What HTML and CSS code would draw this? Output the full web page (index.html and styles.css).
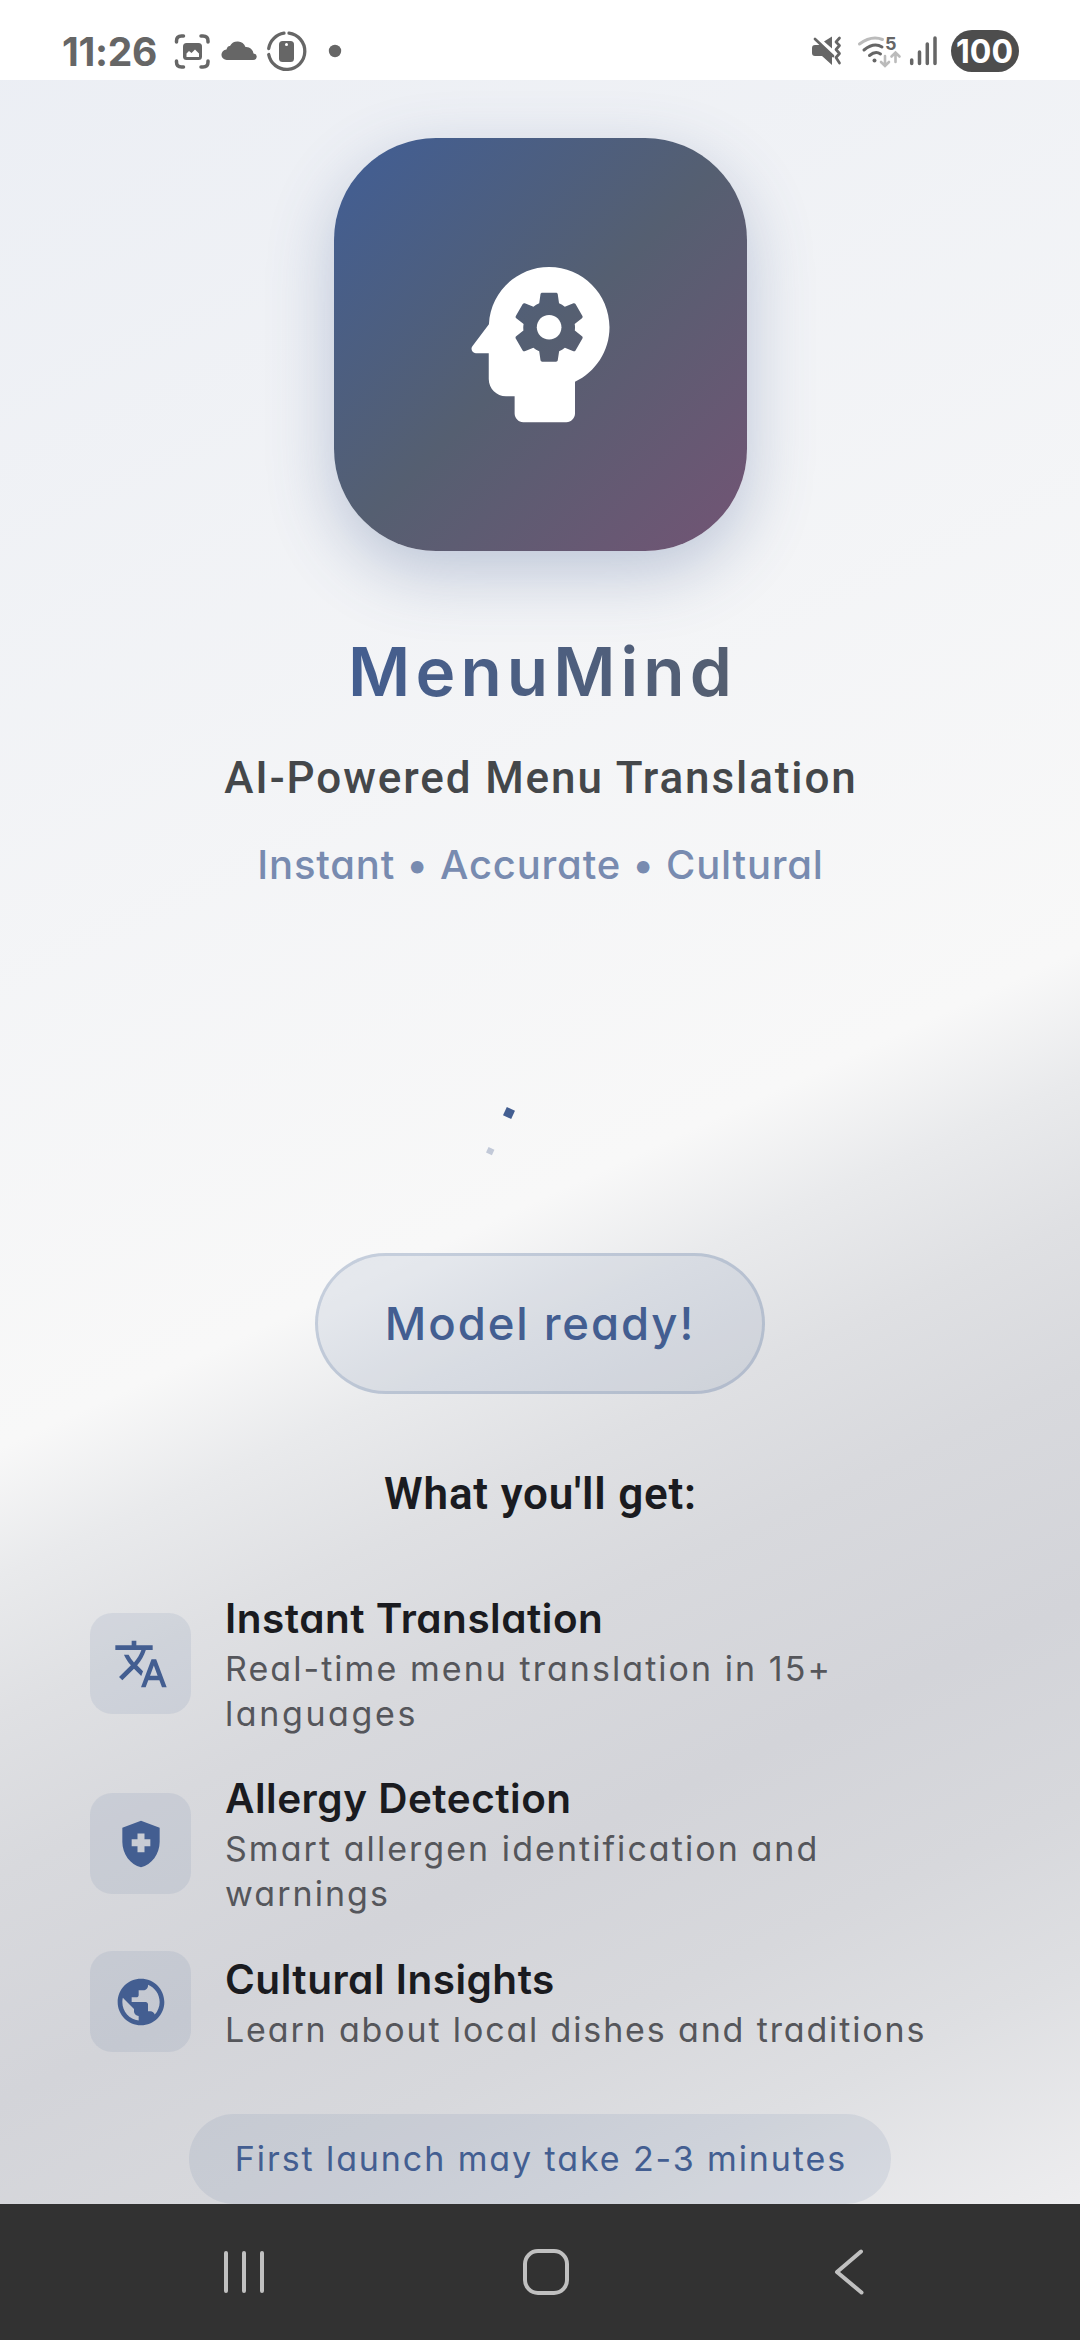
FILE: index.html
```html
<!DOCTYPE html>
<html lang="en">
<head>
<meta charset="utf-8">
<title>MenuMind</title>
<link rel="stylesheet" href="styles.css">
</head>
<body>
<div class="screen">
  <header class="status">
    <span class="clock">11:26</span>
    <svg class="status-left" width="170" height="44" viewBox="172 30 170 44">
      <path d="M176.500 42v-1q0-5 5-5h2M201 36h2q5 0 5 5v1M176.500 61v1q0 5 5 5h2M201 67h2q5 0 5-5v-1" fill="none" stroke="#666" stroke-width="3.500" stroke-linecap="round"/>
      <path d="M284 33.200A18.500 18.500 0 0 0 268.700 48.500M268.700 54.500A18.200 18.200 0 1 0 289 33.200" fill="none" stroke="#666" stroke-width="3.300" stroke-linecap="round"/>
      <rect x="183" y="43" width="19" height="17" rx="3.500" fill="#666"/>
      <path d="M186.500 57v-3.500l2.500-2.500 2.500 2 3.500-3.500 1.500 1.500 2.500 2.500v3.500z" fill="#fff"/>
      <path d="M227 60a5.300 5.300 0 0 1-.500-10.600q1-3.600 3.500-3.400a8.600 8.600 0 0 1 15.500 1q6.500-.500 8 6.500 3.500.500 3.200 3.500-.200 3-3.700 3z" fill="#666"/>
      <rect x="279" y="41" width="15" height="21" rx="3.500" fill="#666"/><circle cx="286.500" cy="44.500" r="1.500" fill="#fff"/>
      <circle cx="335" cy="51" r="6.200" fill="#666"/>
    </svg>
    <svg class="status-right" width="210" height="44" viewBox="810 29 210 44">
      <path d="M815 45h6l11 10v10l-10-9h-7q-3 0-3-3v-5q0-3 3-3zM824 41.500l8-5v12z" fill="#666"/>
      <path d="M815 39l18 17M839.500 38l-3.500 4 3.500 3.500-3.500 4 3.500 4-3.500 4 3.500 5.500" fill="none" stroke="#666" stroke-width="2.700" stroke-linecap="round" stroke-linejoin="round"/>
      <g fill="none" stroke-width="3" stroke-linecap="round">
        <path d="M859.500 44q12-9 23-4.500" stroke="#bbb"/>
        <path d="M864 50q10-8 18-3M869.500 55.500q6-5 11-1.500" stroke="#666"/>
        <path d="M885 56v9M881 62l4 4 4-4M895.500 62v-9M891.500 56.500l4-4 4 4" stroke="#bbb" stroke-width="2.600"/>
        <path d="M911.700 60v3.500M919.500 52v11.500M927.300 44v19.500M935 38v25.500" stroke="#666" stroke-width="3.500"/>
      </g>
      <circle cx="874.500" cy="60.500" r="2" fill="#666"/>
      <text x="885" y="50" class="wifi-gen">5</text>
      <rect x="951" y="30" width="68" height="42" rx="21" fill="#4d4d4d"/>
      <text x="984.500" y="63" text-anchor="middle" class="battery" textLength="57" lengthAdjust="spacingAndGlyphs">100</text>
    </svg>
  </header>

  <main class="splash">
    <div class="logo">
      <svg width="207" height="207" viewBox="0 0 24 24" fill="#fff"><path d="M13 8.570c-.790 0-1.430.640-1.430 1.430s.640 1.430 1.430 1.430 1.430-.640 1.430-1.430-.640-1.430-1.430-1.430z"/><path d="M13 3C9.250 3 6.200 5.940 6.020 9.640L4.100 12.200c-.250.330-.010.800.400.800H6v3c0 1.100.900 2 2 2h1v2c0 .550.450 1 1 1h5c.550 0 1-.450 1-1v-3.680c2.360-1.120 4-3.530 4-6.320 0-3.870-3.130-7-7-7zm3 7c0 .130-.010.260-.020.390l.830.660c.080.060.100.160.050.250l-.800 1.390c-.050.090-.160.120-.240.090l-.990-.400c-.210.160-.430.290-.670.390L14 13.830c-.010.100-.100.170-.200.170h-1.600c-.100 0-.180-.070-.200-.170l-.150-1.060c-.250-.100-.470-.230-.680-.390l-.990.400c-.090.030-.200 0-.250-.090l-.800-1.390c-.050-.080-.030-.190.050-.250l.840-.660c-.010-.130-.020-.260-.020-.390s.020-.270.040-.390l-.850-.660c-.080-.060-.100-.160-.050-.260l.800-1.380c.050-.090.150-.120.240-.090l1 .400c.200-.150.430-.290.670-.390L12 6.170c.020-.100.100-.170.200-.170h1.600c.100 0 .180.070.200.170l.150 1.060c.240.100.460.230.670.390l1-.400c.090-.030.200 0 .240.090l.800 1.380c.050.090.030.200-.050.260l-.850.660c.030.120.040.250.040.390z"/></svg>
    </div>
    <h1 class="brand">MenuMind</h1>
    <p class="tagline">AI-Powered Menu Translation</p>
    <p class="values">Instant • Accurate • Cultural</p>
    <svg class="loader" width="120" height="120" viewBox="0 0 120 120">
      <rect x="24.500" y="28.500" width="9" height="9" fill="#435e91" transform="rotate(25 29 33)"/>
      <rect x="7" y="68" width="6.500" height="6" fill="#c2c9d8" transform="rotate(25 10 71)"/>
    </svg>
    <div class="ready">Model ready!</div>
    <h2 class="heading">What you'll get:</h2>
    <ul class="features">
      <li class="feature">
        <div class="tile"><svg width="56" height="56" viewBox="0 0 24 24"><path d="M12.870 15.070l-2.540-2.510.030-.030c1.740-1.940 2.980-4.170 3.710-6.530H17V4h-7V2H8v2H1v1.990h11.170C11.500 7.920 10.440 9.750 9 11.350 8.070 10.320 7.300 9.190 6.690 8h-2c.730 1.630 1.730 3.170 2.980 4.560l-5.090 5.020L4 19l5-5 3.110 3.110.760-2.040zM18.500 10h-2L12 22h2l1.120-3h4.750L21 22h2l-4.500-12zm-2.620 7l1.620-4.330L19.120 17h-3.240z"/></svg></div>
        <div class="copy"><h3 class="name">Instant Translation</h3><p class="desc">Real-time menu translation in 15+<br><span class="wide">languages</span></p></div>
      </li>
      <li class="feature">
        <div class="tile"><svg width="56" height="56" viewBox="0 0 24 24"><path d="M10.500 13H8v-3h2.500V7.500h3V10H16v3h-2.500v2.500h-3V13zM12 2L4 5v6.090c0 5.050 3.410 9.760 8 10.910 4.590-1.150 8-5.860 8-10.910V5l-8-3z" fill-rule="evenodd"/></svg></div>
        <div class="copy"><h3 class="name">Allergy Detection</h3><p class="desc">Smart allergen identification and<br>warnings</p></div>
      </li>
      <li class="feature">
        <div class="tile"><svg width="56" height="56" viewBox="0 0 24 24"><path d="M12 2C6.480 2 2 6.480 2 12s4.480 10 10 10 10-4.480 10-10S17.520 2 12 2zm-1 17.930c-3.950-.490-7-3.850-7-7.930 0-.620.080-1.210.210-1.790L9 15v1c0 1.100.900 2 2 2v1.930zm6.900-2.540c-.260-.810-1-1.390-1.900-1.390h-1v-3c0-.550-.450-1-1-1H8v-2h2c.550 0 1-.450 1-1V7h2c1.100 0 2-.900 2-2v-.410c2.930 1.190 5 4.060 5 7.410 0 2.080-.800 3.970-2.100 5.390z"/></svg></div>
        <div class="copy"><h3 class="name">Cultural Insights</h3><p class="desc desc-single">Learn about local dishes and traditions</p></div>
      </li>
    </ul>
    <div class="note">First launch may take 2-3 minutes</div>
  </main>

  <nav class="nav">
    <svg width="1080" height="136" viewBox="0 2204 1080 136" fill="none" stroke="#c0c0c0" stroke-width="4" stroke-linecap="round" stroke-linejoin="round">
      <path d="M226 2253v38M244 2253v38M262 2253v38"/>
      <rect x="525" y="2251" width="42" height="42" rx="13"/>
      <path d="M861 2251.500l-24 20.500 24.500 20.500"/>
    </svg>
  </nav>
</div>
</body>
</html>
```

FILE: styles.css
```css
* { box-sizing: border-box; margin: 0; padding: 0; }
body { width: 1080px; height: 2340px; font-family: Inter, "Noto Sans", sans-serif; font-feature-settings: "cv11" 1; }
.screen { display: flex; flex-direction: column; width: 1080px; height: 2340px; overflow: hidden; }
svg { display: block; flex: none; }

.status { height: 80px; flex: none; background: #fff; display: flex; align-items: flex-start; padding: 30px 60px 0 62px; }
.clock { width: 110px; flex: none; font: 700 39px/44px Inter, sans-serif; color: #666; white-space: nowrap; letter-spacing: -.3px; }
.status-left { overflow: visible; }
.status-right { margin: -1px 0 0 auto; overflow: visible; }
.wifi-gen { font: 700 18px Inter, sans-serif; fill: #666; }
.battery { font: 700 33px Inter, sans-serif; fill: #fff; }

.splash {
  flex: none; height: 2124px; display: flex; flex-direction: column; align-items: center; padding-top: 58px;
  background: linear-gradient(155.220deg, #ebeef4 0%, #f8f8f8 51%, #e9eaec 55.500%, #dfe0e3 60.500%, #d8d9dd 66%, #d3d4d9 74%, #d7d8dc 81%, #dedfe2 87%, #ececee 94.500%, #f7f7f7 100%) 0 -80px / 1080px 2340px no-repeat;
}
.logo {
  width: 413px; height: 413px; flex: none; border-radius: 102px; display: grid; place-items: center;
  background: linear-gradient(135deg, #435e91 6%, #555f71 50%, #705574 96%);
  box-shadow: 0 22px 66px rgba(67, 94, 145, .3);
}
.brand {
  margin: 76px 0 0 5px; font-size: 67.500px; line-height: 90px; font-weight: 600; letter-spacing: 5.100px; white-space: nowrap;
  background: linear-gradient(105deg, #435e91 0%, #555f71 95%); background-clip: text; -webkit-background-clip: text; color: transparent;
}
.tagline { margin: 31px 0 0 2px; font: 500 44px/60px Roboto, sans-serif; color: #44474a; letter-spacing: 1.900px; white-space: nowrap; }
.values { margin: 28px 0 0 1px; font-size: 40px; line-height: 58px; font-weight: 500; color: #788bb0; letter-spacing: .800px; white-space: nowrap; }
.loader { margin: 186px 0 53px; }
.ready {
  width: 450px; height: 141px; flex: none; border: 3px solid rgba(67, 94, 145, .2); border-radius: 71px;
  background: rgba(67, 94, 145, .1);
  display: grid; place-items: center; font-size: 45.500px; font-weight: 500; color: #435e91; letter-spacing: 1.900px; white-space: nowrap;
}
.heading { margin: 70px 0 0 1px; font: 600 44px/60px Roboto, sans-serif; color: #1a1b20; letter-spacing: .8px; white-space: nowrap; }
.features { list-style: none; align-self: stretch; margin-top: 67px; padding: 0 90px; display: flex; flex-direction: column; gap: 35px; }
.feature { display: flex; align-items: center; gap: 34px; }
.tile { width: 101px; height: 101px; flex: none; border-radius: 22px; background: rgba(67, 94, 145, .1); display: grid; place-items: center; }
.tile svg { fill: #435e91; }
.copy { white-space: nowrap; }
.name { font-size: 40.500px; line-height: 55px; font-weight: 600; color: #1a1b20; letter-spacing: .5px; }
.desc { font-size: 34px; line-height: 45px; color: #55565b; font-weight: 400; letter-spacing: 2.050px; }
.desc-single { letter-spacing: 1.850px; }
.wide { letter-spacing: 2.600px; }
.note {
  margin-top: 62px; width: 702px; height: 90px; flex: none; border-radius: 45px; background: rgba(67, 94, 145, .1);
  display: grid; place-items: center; padding: 0 0 2px 2px; font-size: 34px; color: #435e91; letter-spacing: 1.900px; white-space: nowrap;
}
.nav { flex: none; height: 136px; background: #323232; }
```
